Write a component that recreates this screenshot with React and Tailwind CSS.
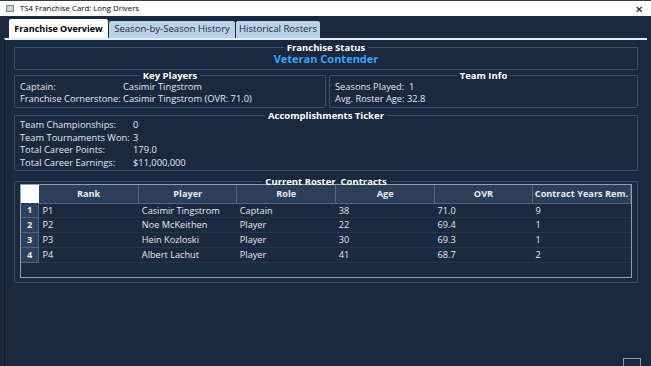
import React from 'react';

const rows = [
    ['P1', 'Casimir Tingstrom', 'Captain', '38', '71.0', '9'],
    ['P2', 'Noe McKeithen', 'Player', '22', '69.4', '1'],
    ['P3', 'Hein Kozloski', 'Player', '30', '69.3', '1'],
    ['P4', 'Albert Lachut', 'Player', '41', '68.7', '2'],
];

const cols = [
    ['Rank', 'w-[100px]'],
    ['Player', 'w-[98px]'],
    ['Role', 'w-[99px]'],
    ['Age', 'w-[99px]'],
    ['OVR', 'w-[98px]'],
    ['Contract Years Rem.', 'w-[98px]'],
];

const Group = ({ title, className = '', children }) => (
    <fieldset className={`border border-[#3d4f6b] rounded-[2px] px-[5px] ${className}`}>
        <legend className="mx-auto px-[3px] font-bold text-[9.5px] leading-[9px] text-white">{title}</legend>
        {children}
    </fieldset>
);

export default function App() {
    return (
        <div
            className="w-[651px] h-[366px] overflow-hidden bg-[#1a2940] text-[#e3e8ef] flex flex-col"
            style={{ fontFamily: '"Open Sans", "Noto Sans", sans-serif' }}
        >
            <div className="h-[16px] shrink-0 border-t border-[#3a3a3a] bg-white flex items-center pl-[6px] pr-[8px]">
                <div className="w-[8px] h-[7px] border border-[#7a8596] bg-[#c9d2de] mr-[6px]" />
                <span className="text-[7.8px] text-black">TS4 Franchise Card: Long Drivers</span>
                <span className="ml-auto text-[10px] text-black leading-none">✕</span>
            </div>

            <div className="flex items-end pl-[9px] mt-[4px] h-[18px] shrink-0">
                <div className="h-[19px] w-[99px] bg-white text-black font-bold text-[9px] flex items-center justify-center rounded-t-[2px]">
                    Franchise Overview
                </div>
                <div className="h-[17px] w-[126px] ml-[1px] bg-[#b8d2e9] text-[#1a2940] text-[9.6px] flex items-center justify-center rounded-t-[2px]">
                    Season-by-Season History
                </div>
                <div className="h-[17px] w-[84px] ml-[1px] bg-[#b8d2e9] text-[#1a2940] text-[9.6px] flex items-center justify-center rounded-t-[2px]">
                    Historical Rosters
                </div>
            </div>

            <div className="flex-1 mx-[4px] border-t-2 border-t-[#e6ecf3] border-l border-l-[#0f1a2a] pl-[9px] pr-[9px] pt-[3px] flex flex-col gap-[1px] relative">
                <Group title="Franchise Status" className="h-[27px] text-center">
                    <div className="text-[11px] font-bold text-[#3ea2f2] leading-[10px] mt-[2px]">Veteran Contender</div>
                </Group>

                <div className="flex gap-[3px]">
                    <Group title="Key Players" className="w-[312px] h-[37px] text-[9.3px] leading-[10px]">
                        <div className="flex mt-[2px]">
                            <span className="w-[103px]">Captain:</span>
                            <span>Casimir Tingstrom</span>
                        </div>
                        <div className="mt-[2px]">Franchise Cornerstone: Casimir Tingstrom (OVR: 71.0)</div>
                    </Group>
                    <Group title="Team Info" className="flex-1 h-[37px] text-[9.3px] leading-[10px]">
                        <div className="mt-[2px]">Seasons Played:&nbsp;&nbsp;1</div>
                        <div className="mt-[2px]">Avg. Roster Age: 32.8</div>
                    </Group>
                </div>

                <Group title="Accomplishments Ticker" className="h-[60px] text-[9.3px] leading-[12.5px] mt-[2px]">
                    <div className="-mt-[1px]">
                        {[
                            ['Team Championships:', '0'],
                            ['Team Tournaments Won:', '3'],
                            ['Total Career Points:', '179.0'],
                            ['Total Career Earnings:', '$11,000,000'],
                        ].map(([k, v]) => (
                            <div key={k} className="flex">
                                <span className="w-[113px]">{k}</span>
                                <span>{v}</span>
                            </div>
                        ))}
                    </div>
                </Group>

                <Group title="Current Roster  Contracts" className="h-[106px] mt-[5px] whitespace-pre">
                    <div className="border border-[#8aa0bd] h-[94px] -mt-[2px] bg-[#1b2a41]">
                        <table className="border-collapse text-[9.2px]">
                            <thead>
                                <tr className="h-[18px]">
                                    <th className="w-[18px] bg-white p-0" />
                                    {cols.map(([c, w]) => (
                                        <th
                                            key={c}
                                            className={`${w} bg-[#2d3e58] border-r border-b border-[#51647f] font-bold text-[#e6ebf2] p-0 text-center`}
                                        >
                                            {c}
                                        </th>
                                    ))}
                                </tr>
                            </thead>
                            <tbody>
                                {rows.map((r, i) => (
                                    <tr key={i} className="h-[14.5px]">
                                        <td className="bg-[#2f405a] border-b border-r border-[#51647f] font-bold text-center p-0">
                                            {i + 1}
                                        </td>
                                        {r.map((v, j) => (
                                            <td key={j} className="pl-[3px] p-0 border-b border-[#24354e]">
                                                {v}
                                            </td>
                                        ))}
                                    </tr>
                                ))}
                            </tbody>
                        </table>
                    </div>
                </Group>

                <div className="absolute right-[6px] bottom-0 w-[18px] h-[8px] border border-[#8a9ab0] border-b-0" />
            </div>
        </div>
    );
}
